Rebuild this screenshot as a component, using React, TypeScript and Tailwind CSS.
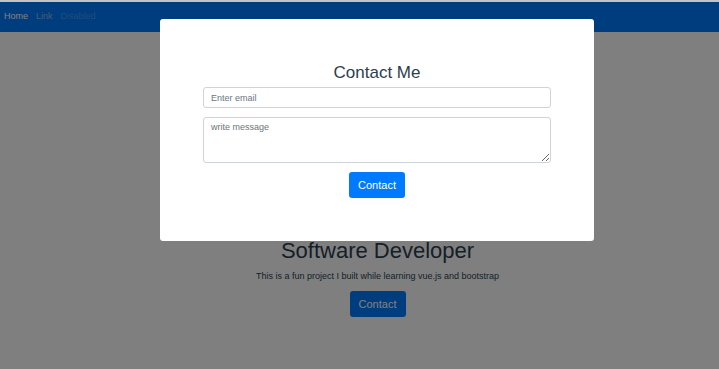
import { useState } from "react";

export default function App() {
  const [email, setEmail] = useState("");
  const [message, setMessage] = useState("");

  return (
    <div
      className="min-h-screen bg-white text-[#2c3e50]"
      style={{ fontFamily: '"Liberation Sans", Arial, sans-serif' }}
    >
      {/* thin strip above the navbar */}
      <div className="h-[2px] bg-[#c4c4c4]" />

      {/* Navbar */}
      <nav className="h-[30px] bg-[#007bff] flex items-center pl-[4px] gap-[8px] text-[9px]">
        <a className="text-white">Home</a>
        <a className="text-white/50">Link</a>
        <a className="text-white/25">Disabled</a>
      </nav>

      {/* Page content */}
      <main className="pl-[36px] pt-[206px] flex flex-col items-center">
        <h1 className="text-[22px] leading-[26px]">Software Developer</h1>
        <p className="mt-[6px] text-[9px] leading-[12px]">
          This is a fun project I built while learning vue.js and bootstrap
        </p>
        <button className="mt-[9px] w-[56px] h-[26px] rounded-[3px] bg-[#007bff] text-white text-[11px]">
          Contact
        </button>
      </main>

      {/* Backdrop */}
      <div className="fixed inset-x-0 top-[2px] bottom-0 bg-black/50" />

      {/* Modal */}
      <div className="fixed left-[160px] top-[19px] w-[434px] h-[222px] bg-white rounded-[3px] flex flex-col items-center pt-[43px]">
        <h2 className="text-[17px] leading-[22px] text-[#2c3e50]">Contact Me</h2>
        <input
          type="text"
          value={email}
          onChange={(e) => setEmail(e.target.value)}
          placeholder="Enter email"
          className="mt-[3px] w-[348px] h-[21px] px-[7px] border border-[#ced4da] rounded-[3px] text-[9px] text-[#495057] placeholder:text-[#6c757d] outline-none"
        />
        <textarea
          value={message}
          onChange={(e) => setMessage(e.target.value)}
          placeholder="write message"
          className="mt-[9px] w-[348px] h-[46px] px-[7px] py-[3px] border border-[#ced4da] rounded-[3px] text-[9px] leading-[12px] text-[#495057] placeholder:text-[#6c757d] outline-none"
        />
        <button className="mt-[9px] w-[56px] h-[26px] rounded-[3px] bg-[#007bff] text-white text-[11px]">
          Contact
        </button>
      </div>
    </div>
  );
}
